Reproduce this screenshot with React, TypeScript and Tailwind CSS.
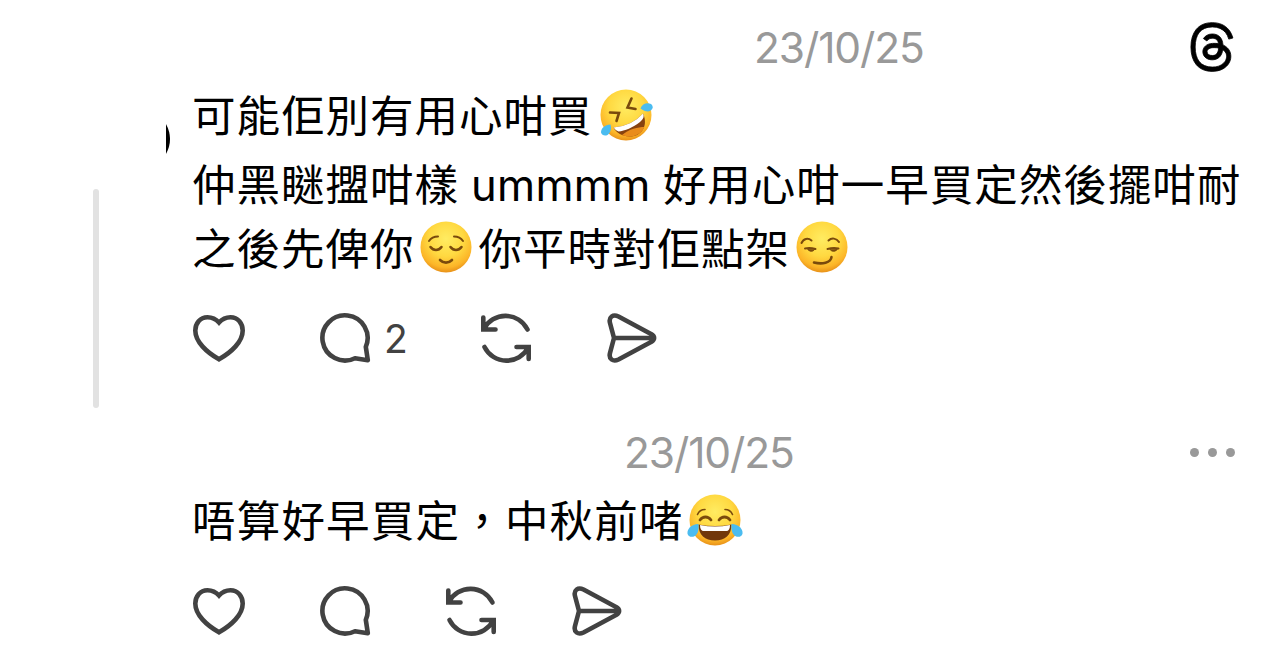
import { ReactNode } from "react";
import { FaThreads } from "react-icons/fa6";

function Heart() {
  return (
    <svg className="h-[52px] w-[54px] shrink-0" viewBox="0 0 54 52" fill="none" stroke="#424242" strokeWidth="4.6" strokeLinejoin="miter">
      <path d="M27 10.5C23.5 6.5 19.5 5.2 15.5 5.2C8 5.2 3.3 11.5 3.3 18.5C3.3 30 15 40.5 27 47.3C39 40.5 50.7 30 50.7 18.5C50.7 11.5 46 5.2 38.5 5.2C34.5 5.2 30.5 6.5 27 10.5Z" />
    </svg>
  );
}

function Reply() {
  return (
    <svg className="h-[52px] w-[54px] shrink-0" viewBox="0 0 54 52" fill="none" stroke="#424242" strokeWidth="4.6" strokeLinejoin="round">
      <path d="M46.8 34.8A22.6 22.6 0 1 0 36 46.2L48.8 48.2Z" />
    </svg>
  );
}

function Repost() {
  return (
    <svg className="h-[52px] w-[54px] shrink-0" viewBox="0 0 54 52" fill="none" stroke="#424242" strokeWidth="4.6" strokeLinecap="round">
      <path d="M4.3 5.5V17.5H16.5M4.8 17A24.5 24.5 0 0 1 48.5 17.5" />
      <path d="M49.7 47V35H37.5M49.2 35.5A24.5 24.5 0 0 1 5.5 35" />
    </svg>
  );
}

function Send() {
  return (
    <svg className="h-[52px] w-[54px] shrink-0" viewBox="0 0 54 52" fill="none" stroke="#424242" strokeWidth="4.6" strokeLinejoin="round">
      <path d="M4 11C2.5 5 7 1.8 12.5 4.5L45.5 22.3C49 24.5 49 27.5 45.5 29.7L12.5 47.5C7 50.2 2.5 47 4 41L8 26ZM8 26H47" />
    </svg>
  );
}

type Mood = "rofl" | "relieved" | "smirk" | "joy";

function Emoji({ mood }: { mood: Mood }) {
  const ink = "#7a4a0c";
  return (
    <svg className="h-[54px] w-[56px] shrink-0" viewBox="0 0 56 54" fill="none" strokeLinecap="round">
      <defs>
        <radialGradient id={mood} cx="0.5" cy="0.34" r="0.68">
          <stop offset="0" stopColor="#ffec62" />
          <stop offset="0.5" stopColor="#ffd941" />
          <stop offset="0.82" stopColor="#fcb528" />
          <stop offset="1" stopColor="#e48a16" />
        </radialGradient>
      </defs>
      <circle cx="28" cy="27" r="25.5" fill={`url(#${mood})`} />
      {mood === "relieved" && (
        <g stroke={ink} strokeWidth="2">
          <path d="M11 21C13 18 16 16.5 20 16.5M45 21C43 18 40 16.5 36 16.5" />
          <path d="M12.5 27C15.5 31 20.5 31 23.5 27M32.5 27C35.5 31 40.5 31 43.5 27" strokeWidth="2.6" />
          <path d="M22 40C25.5 43.5 30.5 43.5 34 40" strokeWidth="2.6" />
        </g>
      )}
      {mood === "smirk" && (
        <g stroke={ink} strokeWidth="2">
          <path d="M7.5 23C9.5 18.5 14 17.5 17.5 20.5M34.5 20.5C37.5 17.5 42.5 18 45 22" />
          <path d="M11 28.5Q16 27.5 21.5 29M33.5 29Q39 27.5 44.5 28.5" />
          <path d="M13.5 29C15 32 19.5 32 20.5 29.5ZM36 29.5C37.5 32 42 32 43.5 29Z" fill={ink} strokeWidth="1" />
          <path d="M20 42.5C28 44.5 37 43 37.5 37" strokeWidth="2.6" />
        </g>
      )}
      {mood === "joy" && (
        <g>
          <path d="M10.5 21.5C12 18 14.5 16.5 18 16.5M45.5 21.5C44 18 41.5 16.5 38 16.5" stroke={ink} strokeWidth="1.6" />
          <path d="M13 27C16 23 21 23 24 27M32 27C35 23 40 23 43 27" stroke={ink} strokeWidth="2.8" />
          <path d="M11.5 31.5Q28 34.5 44.5 31.5C44.5 42 38 47.5 28 47.5S11.5 42 11.5 31.5Z" fill="#71370b" />
          <path d="M13 32Q28 35 43 32C43 36 41.5 38 39.5 38H16.5C14.5 38 13 36 13 32Z" fill="#fff" />
          <path d="M11.5 31C4 31.5 0 36 .5 40.5C1 44.5 7 45 9.5 41.5C11.5 38.5 12 35 11.5 31Z" fill="#4bbcf0" />
          <path d="M44.5 31C52 31.5 56 36 55.5 40.5C55 44.5 49 45 46.5 41.5C44.5 38.5 44 35 44.5 31Z" fill="#4bbcf0" />
        </g>
      )}
      {mood === "rofl" && (
        <g>
          <path d="M12 24.5L21 25L18.5 33M33.5 10.5L29.5 19.5L37.5 21" stroke={ink} strokeWidth="2.6" />
          <path d="M15.5 39.5Q34 38 45 25.5C50 36 45 46 36 48C27 50 19 46 15.5 39.5Z" fill="#87420f" />
          <path d="M24 47C31 41 40 39 46.5 39C44.5 43.5 41 46.5 36 48C31.5 49 27.5 48.5 24 47Z" fill="#e98c1c" />
          <path d="M15.5 39.5Q34 38 45 25.5C46.5 28.5 45.5 31 42 34C35 39.5 26.5 43 20.5 43.5Q17.5 42.5 15.5 39.5Z" fill="#fff" />
          <path d="M12.5 36.5C7 37 3 40 3 44.5C4 48.5 9.5 48.5 11.5 45C13 42.5 13.5 40 12.5 36.5Z" fill="#4bbcf0" />
          <path d="M42.5 20.5C44 15.5 49.5 14 53 16C56.5 19 54 23 50 23.5C47.5 23.5 45 22.5 42.5 20.5Z" fill="#4bbcf0" />
        </g>
      )}
    </svg>
  );
}

function Line({ children }: { children: ReactNode }) {
  return (
    <div className="flex h-16 items-center whitespace-pre text-[43.5px] leading-[64px] tracking-[1px] text-black">
      {children}
    </div>
  );
}

function PostDate() {
  return <span className="text-[42.5px] leading-[50px] tracking-[-1.1px] text-[#999999]">23/10/25</span>;
}

export default function App() {
  return (
    <div className="flex h-[647px] w-[1284px] overflow-hidden bg-white font-[Inter,'Noto_Sans_CJK_TC',sans-serif]">
      {/* Thread line and the clipped avatar edge */}
      <aside className="flex w-[192px] shrink-0">
        <div className="ml-[93px] mt-[189px] h-[219px] w-1.5 rounded-full bg-[#e2e2e2]" />
        <svg className="ml-[67px] mt-[124px] h-[30px] w-1" viewBox="0 0 4 30">
          <path d="M0 0Q8 15 0 30Z" />
        </svg>
      </aside>

      <main className="flex w-[1092px] flex-col">
        <article className="h-[405px]">
          <header className="flex h-[83px] items-start pl-[562px] pt-[23px]">
            <PostDate />
            <FaThreads className="-mt-0.5 ml-auto mr-[46px] h-[52px] w-[52px] stroke-black stroke-[8]" />
          </header>
          <Line>
            <span className="mt-0.5">可能佢別有用心咁買</span>
            <span className="ml-[5px]"><Emoji mood="rofl" /></span>
          </Line>
          <div className="mt-1.5">
            <Line>
              <span>仲黑瞇擝咁樣</span>
              <span className="mx-3 tracking-[0.3px]">ummmm</span>
              <span>好用心咁一早買定然後擺咁耐</span>
            </Line>
            <Line>
              <span>之後先俾你</span>
              <span className="mb-1 ml-[3px] mr-[5px]"><Emoji mood="relieved" /></span>
              <span>你平時對佢點架</span>
              <span className="mb-1 ml-1"><Emoji mood="smirk" /></span>
            </Line>
          </div>
          <footer className="mt-[31px] flex h-[52px] items-center">
            <Heart />
            <div className="ml-[73px] flex w-[160px] items-center">
              <Reply />
              <span className="ml-[11px] mt-px text-[39px] leading-[50px] text-[#424242]">2</span>
            </div>
            <Repost />
            <div className="ml-[73px]"><Send /></div>
          </footer>
        </article>

        <article>
          <header className="flex h-[83px] items-start pl-[432px] pt-[23px]">
            <PostDate />
            <div className="ml-auto mr-[49px] mt-5 flex gap-[9px]">
              <i className="h-[9px] w-[9px] rounded-full bg-[#999999]" />
              <i className="h-[9px] w-[9px] rounded-full bg-[#999999]" />
              <i className="h-[9px] w-[9px] rounded-full bg-[#999999]" />
            </div>
          </header>
          <Line>
            <span className="mt-0.5 tracking-[1.2px]">唔算好早買定，中秋前啫</span>
            <span className="ml-[3px]"><Emoji mood="joy" /></span>
          </Line>
          <footer className="mt-[33px] flex items-center gap-[72px]">
            <Heart />
            <div className="ml-px"><Reply /></div>
            <div className="-ml-px"><Repost /></div>
            <div className="ml-px"><Send /></div>
          </footer>
        </article>
      </main>
    </div>
  );
}
